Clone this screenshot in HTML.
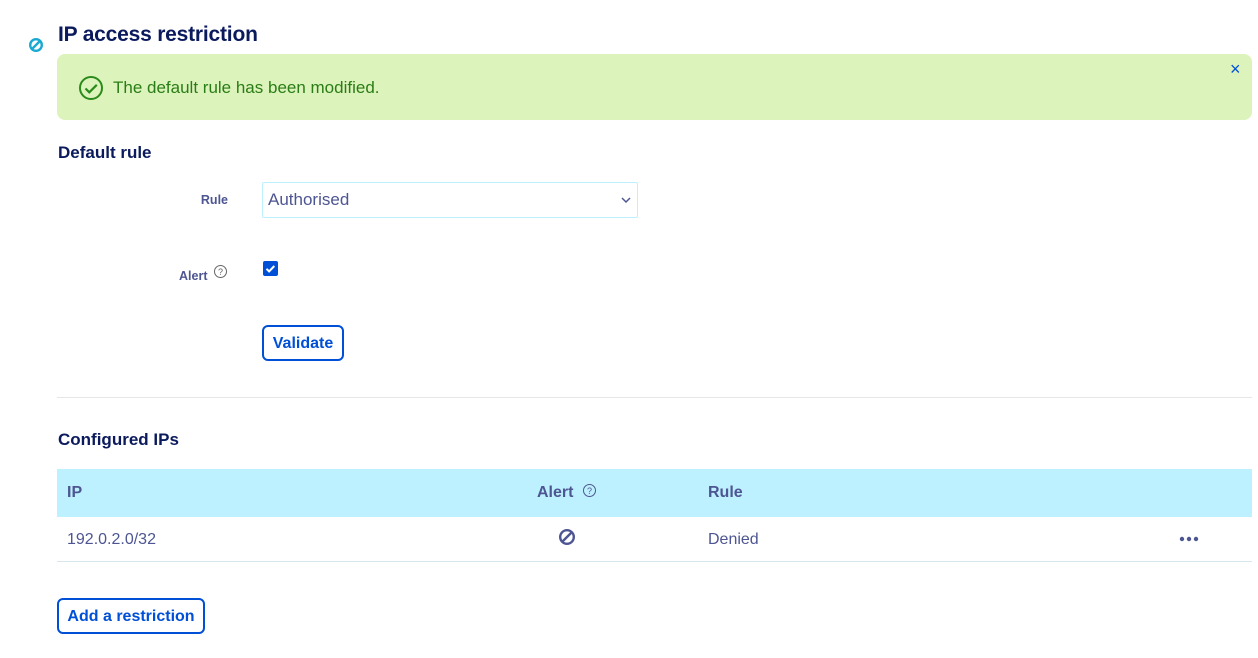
<!DOCTYPE html>
<html><head><meta charset="utf-8"><style>
*{box-sizing:border-box;margin:0;padding:0}
body{width:1258px;height:658px;background:#fff;font-family:"Liberation Sans",sans-serif;position:relative;overflow:hidden;color:#4d5592}
.a{position:absolute;white-space:nowrap}
h1{position:absolute;left:58px;top:23px;font-size:21px;font-weight:bold;color:#0a1a5c;letter-spacing:-0.2px}
.h2{font-size:17px;font-weight:bold;color:#0a1a5c}
.btn{position:absolute;border:2px solid #0050d7;border-radius:6px;color:#0050d7;font-weight:bold;font-size:16px;display:flex;align-items:center;justify-content:center;background:#fff;padding-top:2px}
.lbl{font-size:12.5px;font-weight:bold;color:#4d5592}
</style></head><body>
<svg class="a" style="left:28px;top:37px" width="16" height="16" viewBox="0 0 16 16"><circle cx="8" cy="8" r="5.8" fill="none" stroke="#1aa9d1" stroke-width="2.4"/><line x1="4" y1="12" x2="12" y2="4" stroke="#1aa9d1" stroke-width="2.4"/></svg>
<h1>IP access restriction</h1>
<div class="a" style="left:57px;top:54px;width:1195px;height:66px;background:#ddf3bc;border-radius:8px"></div>
<svg class="a" style="left:78px;top:75px" width="26" height="26" viewBox="0 0 26 26"><circle cx="13" cy="13" r="11" fill="none" stroke="#2a8a1a" stroke-width="2"/><path d="M7.5 13.5l3.8 3.8 7.5-7.5" fill="none" stroke="#2a8a1a" stroke-width="2.2"/></svg>
<div class="a" style="left:113px;top:78px;font-size:17px;color:#2a7d16">The default rule has been modified.</div>
<div class="a" style="left:1230px;top:59px;font-size:18px;color:#0050d7">×</div>
<div class="a h2" style="left:58px;top:143px">Default rule</div>
<div class="a lbl" style="right:1030px;top:193px">Rule</div>
<div class="a" style="left:262px;top:182px;width:376px;height:36px;border:1px solid #bef1ff;border-radius:2px"></div>
<div class="a" style="left:268px;top:190px;font-size:17px;color:#4d5592">Authorised</div>
<svg class="a" style="left:620px;top:196px" width="12" height="8" viewBox="0 0 12 8"><path d="M2 2l4 4 4-4" fill="none" stroke="#4d5592" stroke-width="1.5"/></svg>
<div class="a lbl" style="left:179px;top:269px">Alert</div>
<svg class="a" style="left:213px;top:264px" width="15" height="15" viewBox="0 0 15 15"><circle cx="7.5" cy="7.5" r="6" fill="none" stroke="#666" stroke-width="1"/><text x="7.5" y="11" font-size="9" text-anchor="middle" fill="#666" font-family="Liberation Sans">?</text></svg>
<div class="a" style="left:263px;top:261px;width:15px;height:15px;background:#0050d7;border-radius:2px"></div>
<svg class="a" style="left:263px;top:261px" width="15" height="15" viewBox="0 0 15 15"><path d="M3.5 7.8l2.6 2.6 5.2-5.4" fill="none" stroke="#fff" stroke-width="2"/></svg>
<div class="btn" style="left:262px;top:325px;width:82px;height:36px">Validate</div>
<div class="a" style="left:57px;top:397px;width:1195px;height:1px;background:#e6e6e6"></div>
<div class="a h2" style="left:58px;top:430px">Configured IPs</div>
<div class="a" style="left:57px;top:469px;width:1195px;height:48px;background:#bef1ff"></div>
<div class="a" style="left:67px;top:484px;font-size:16px;font-weight:bold">IP</div>
<div class="a" style="left:537px;top:484px;font-size:16px;font-weight:bold">Alert</div>
<svg class="a" style="left:582px;top:483px" width="15" height="15" viewBox="0 0 15 15"><circle cx="7.5" cy="7.5" r="6" fill="none" stroke="#4d5592" stroke-width="1"/><text x="7.5" y="11" font-size="9" text-anchor="middle" fill="#4d5592" font-family="Liberation Sans">?</text></svg>
<div class="a" style="left:708px;top:484px;font-size:16px;font-weight:bold">Rule</div>
<div class="a" style="left:67px;top:531px;font-size:16px">192.0.2.0/32</div>
<svg class="a" style="left:558px;top:528px" width="18" height="18" viewBox="0 0 18 18"><circle cx="9" cy="9" r="6.8" fill="none" stroke="#4d5592" stroke-width="2.4"/><line x1="4.5" y1="13.5" x2="13.5" y2="4.5" stroke="#4d5592" stroke-width="2.4"/></svg>
<div class="a" style="left:708px;top:531px;font-size:16px">Denied</div>
<svg class="a" style="left:1179px;top:536px" width="20" height="6"><circle cx="3" cy="3" r="2.2" fill="#4d5592"/><circle cx="10" cy="3" r="2.2" fill="#4d5592"/><circle cx="17" cy="3" r="2.2" fill="#4d5592"/></svg>
<div class="a" style="left:57px;top:561px;width:1195px;height:1px;background:#d8e6ee"></div>
<div class="btn" style="left:57px;top:598px;width:148px;height:36px">Add a restriction</div>
</body></html>
